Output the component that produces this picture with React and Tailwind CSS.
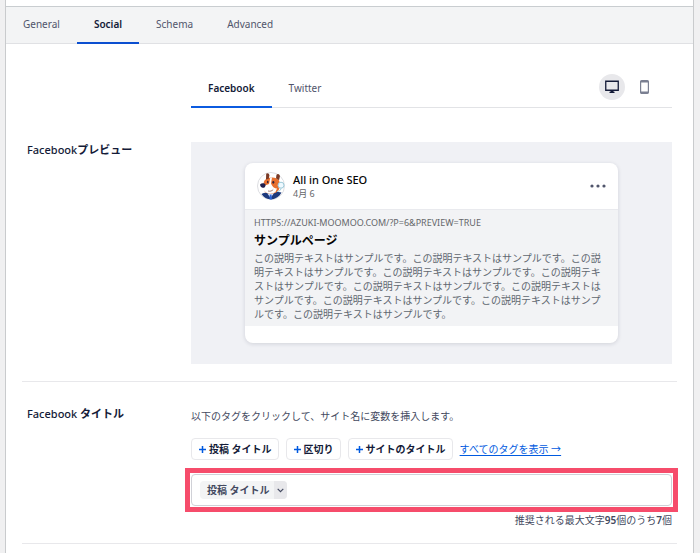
const mainTabs = ["General", "Social", "Schema", "Advanced"];
const socialTabs = ["Facebook", "Twitter"];
const titleTags = ["投稿 タイトル", "区切り", "サイトのタイトル"];

function Avatar() {
  return (
    <svg viewBox="0 0 28 28" className="h-7 w-7 shrink-0" aria-hidden="true">
      <circle cx="14" cy="14" r="13.500" fill="#fff" stroke="#dcdde1" />
      {/* suit */}
      <path d="M4.500 22C7 20.500 11 20.500 14 21.500C18 20 22 19.500 24.500 20.500C20.500 28.800 9 29.800 4.500 22Z" fill="#1d3a7d" />
      <path d="M10.500 21.500L13.500 26L17 21Z" fill="#e8eefb" />
      <path d="M12.600 22.500L14.600 22.500L15 27.400L12.600 27.400Z" fill="#2a62d6" />
      {/* head */}
      <path d="M7 9.500C9 4.800 19.500 4 22 8.500C23.500 12 23 17 20.500 19.500C17 22.500 10.500 22.300 8 20L6 14.500Z" fill="#e8702f" />
      <path d="M13.300 5.600L15 5.600L14 11.500C15 14.500 17.500 16.500 20 16.500L18.500 20C15 22.300 11 22.300 8.500 20L5 16.500L8 13.500L12 12Z" fill="#fff" />
      {/* ears */}
      <path d="M9.200 1.800C10.500 0.600 12.200 1.500 12.400 3.400L11.700 6.800L9 7.600Z" fill="#7a3a26" />
      <path d="M19.500 2.700C20.800 1.200 23 2.300 22.900 4.500L22 8.300L19 6.300Z" fill="#7a3a26" />
      {/* nose, eyes and mouth */}
      <path d="M3.200 12.200C4.500 10.700 7.500 10.800 8.500 12.400C8.900 14.400 7.200 16.200 5.500 15.800C4 15.300 2.900 13.800 3.200 12.200Z" fill="#20204e" />
      <ellipse cx="10.700" cy="10" rx="0.800" ry="1.300" fill="#33203a" />
      <ellipse cx="16.300" cy="10.300" rx="1" ry="1.400" fill="#33203a" />
      <path d="M11 19C13 19.600 15.200 19 16.200 17.500" fill="none" stroke="#7d4a42" strokeWidth="0.700" />
      {/* headset */}
      <circle cx="24" cy="13.200" r="3" fill="#eef9ff" stroke="#9cc9d8" />
      <path d="M24 16.500C23.500 18.500 22 19.500 20 19.500" fill="none" stroke="#9cc9d8" />
    </svg>
  );
}

function Monitor() {
  return (
    <svg viewBox="0 0 14 14" className="h-3.5 w-3.5" aria-hidden="true">
      <path d="M0.750 1.250H13.250V10.250H0.750Z" fill="none" stroke="#141b38" strokeWidth="1.300" />
      <path d="M5.500 10.500H8.500V11.800H9.500V13H4.500V11.800H5.500Z" fill="#141b38" />
    </svg>
  );
}

function Phone() {
  return (
    <svg viewBox="0 0 9 14" className="h-3.5 w-[9px]" aria-hidden="true">
      <rect x="0.600" y="0.600" width="7.800" height="12.800" rx="1.100" fill="none" stroke="#7b8092" strokeWidth="1.200" />
      <path d="M0.600 1.600H8.400M0.600 12.400H8.400" stroke="#7b8092" strokeWidth="1.800" />
    </svg>
  );
}

function Section({ label, children }) {
  return (
    <section className="grid grid-cols-[164px_minmax(0,1fr)] px-[5px]">
      <h2 className="text-[11px] leading-4 font-medium">{label}</h2>
      <div>{children}</div>
    </section>
  );
}

function PreviewCard() {
  return (
    <div className="bg-[#f0f1f5] px-[54px] py-[21px]">
      <article className="overflow-hidden rounded-lg bg-white pb-[17px] shadow-[0_1px_4px_rgba(20,27,56,0.14)]">
        <header className="flex items-center gap-2 px-3 py-[9px] text-[#050505]">
          <Avatar />
          <div className="grow">
            <div className="text-[11px] leading-4 font-medium">All in One SEO</div>
            <div className="text-[9px] leading-3 text-[#65676b]">4月 6</div>
          </div>
          <svg viewBox="0 0 16 4" className="h-1 w-4" fill="#50556b" aria-hidden="true">
            <circle cx="2" cy="2" r="1.600" />
            <circle cx="8" cy="2" r="1.600" />
            <circle cx="14" cy="2" r="1.600" />
          </svg>
        </header>
        <div className="border-t border-[#e9eaee] bg-[#f2f3f5] px-[9px] py-[5px]">
          <div className="text-[9px] leading-4 text-[#65676b]">
            HTTPS://AZUKI-MOOMOO.COM/?P=6&amp;PREVIEW=TRUE
          </div>
          <h3 className="text-xs leading-5 font-bold text-[#050505]">サンプルページ</h3>
          <p className="text-[10px] leading-[14px] text-[#606770]">
            {"この説明テキストはサンプルです。".repeat(10)}
          </p>
        </div>
      </article>
    </div>
  );
}

export default function App() {
  return (
    <div className="min-h-screen bg-[#f0f0f1] pr-1.5 pl-[5px] font-['Noto_Sans','Noto_Sans_CJK_JP',sans-serif] text-[10px] text-[#141b38]">
      <main className="min-h-screen border-x border-[#c9cbcd] bg-white pt-1.5">
        <nav className="flex h-[38px] border-t border-b border-t-[#c9cdd0] border-b-[#e0e1e4] bg-[#f3f4f5]">
          {mainTabs.map((tab) => (
            <button
              key={tab}
              className={`-mb-px border-b-2 px-[17px] ${
                tab === "Social"
                  ? "border-[#0b4fd0] font-semibold"
                  : "border-transparent text-[#50556b]"
              }`}
            >
              {tab}
            </button>
          ))}
        </nav>

        <div className="px-4">
          <div className="mt-[27px] ml-[169px] mr-[5px] flex h-[37px] border-b border-[#e2e3e6]">
            {socialTabs.map((tab) => (
              <button
                key={tab}
                className={`-mb-px border-b-2 px-[17px] ${
                  tab === "Facebook"
                    ? "border-[#0b5be0] font-semibold"
                    : "border-transparent text-[#50556b]"
                }`}
              >
                {tab}
              </button>
            ))}
            <div className="ml-auto flex items-center gap-1.5 pr-[15px] pb-1">
              <button aria-label="Desktop" className="flex h-[26px] w-[26px] items-center justify-center rounded-full bg-[#e8e8eb]">
                <Monitor />
              </button>
              <button aria-label="Mobile" className="flex h-[26px] w-[26px] items-center justify-center">
                <Phone />
              </button>
            </div>
          </div>

          <div className="mt-[34px] border-b border-[#e8e8eb] pb-[17px]">
            <Section label={<>Facebook<b>プレビュー</b></>}>
              <PreviewCard />
            </Section>
          </div>

          <div className="border-b border-[#e8e8eb] pt-6 pb-[15px]">
            <Section label={<>Facebook <b>タイトル</b></>}>
              <p className="pt-0.5 leading-4 text-[#434960]">
                以下のタグをクリックして、サイト名に変数を挿入します。
              </p>
              <div className="mt-3.5 flex items-center gap-[7px]">
                {titleTags.map((tag) => (
                  <button
                    key={tag}
                    className="flex h-[22px] items-center gap-[3px] rounded-sm border border-[#e8e8eb] pr-1.5 pl-[7px] font-semibold whitespace-nowrap"
                  >
                    <svg viewBox="0 0 7 7" className="h-[7px] w-[7px]" aria-hidden="true">
                      <path d="M3.500 0V7M0 3.500H7" stroke="#005ae0" strokeWidth="1.500" />
                    </svg>
                    {tag}
                  </button>
                ))}
                <a href="#tags" className="whitespace-nowrap text-[#005ae0] underline underline-offset-2">
                  すべてのタグを表示 →
                </a>
              </div>

              <div className="-mx-1.5 mt-2 border-5 border-[#f64c6b] p-px">
                <div className="flex h-8 items-center rounded-sm border border-[#d0d1d7] px-2">
                  <button className="flex h-[18px] shrink-0 items-stretch overflow-hidden rounded-sm bg-[#f3f4f5] font-semibold text-[#434960]">
                    <span className="flex items-center pr-1 pl-[7px]">投稿 タイトル</span>
                    <span className="flex w-[13px] items-center justify-center bg-[#e8e8eb]">
                      <svg viewBox="0 0 7 5" className="h-[5px] w-[7px]" aria-hidden="true">
                        <path d="M0.700 0.800L3.500 3.600L6.300 0.800" fill="none" stroke="#434960" strokeWidth="1.200" />
                      </svg>
                    </span>
                  </button>
                  <input type="text" aria-label="Facebook タイトル" className="h-5 min-w-0 grow outline-none" />
                </div>
              </div>
              <p className="text-right leading-4 text-[#434960]">
                推奨される最大文字<b className="font-semibold">95</b>個のうち<b className="font-semibold">7</b>個
              </p>
            </Section>
          </div>
        </div>
      </main>
    </div>
  );
}
